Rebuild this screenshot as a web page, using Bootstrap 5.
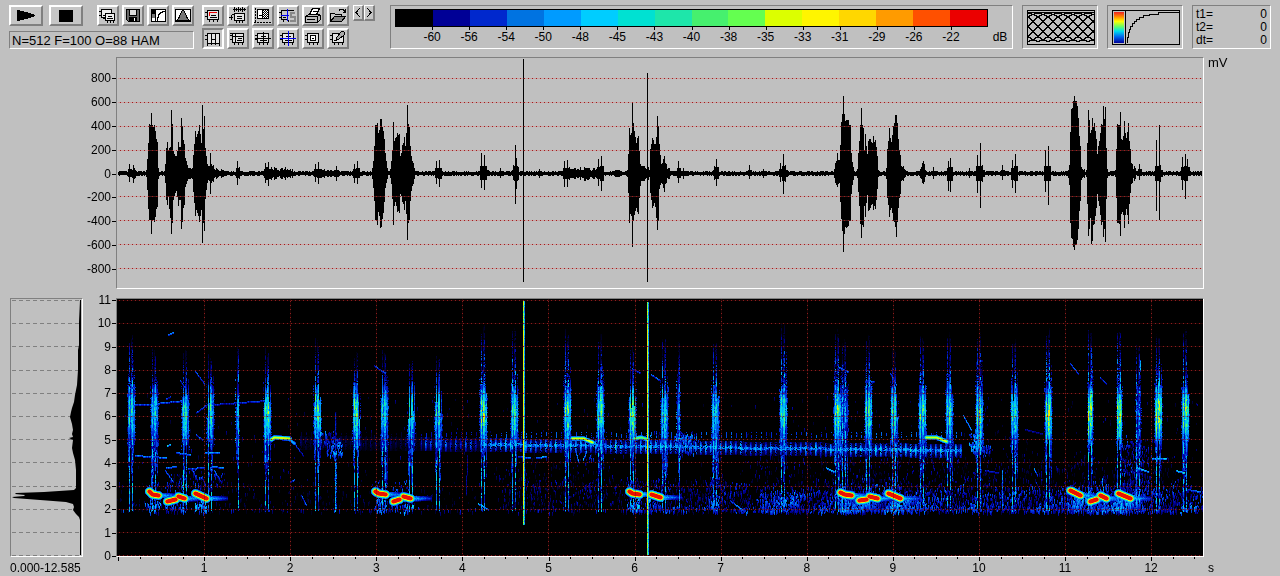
<!DOCTYPE html>
<html lang="en">
<head>
<meta charset="utf-8">
<meta name="viewport" content="width=device-width, initial-scale=1">
<title>Spectrogram analysis</title>
<link href="https://cdn.jsdelivr.net/npm/bootstrap@5.3.0/dist/css/bootstrap.min.css" rel="stylesheet">
<style>
body{background:#c0c0c0;color:#000;font:12px/14px "Liberation Sans",Arial,sans-serif}
.toolbar{padding:5px 9px 0 9px}
.tools-a{width:185px;flex:none}
.gap-tool{gap:3px}
.tool-rows{gap:2px}
.tool{width:22px;height:21px;padding:0;border:2px solid;border-color:#fff #808080 #808080 #fff;background:#c6c6c6;display:flex;align-items:center;justify-content:center;flex:none}
.tool.wide{width:34px}
.tool.slim{width:11px;height:16px;border-width:1px 2px 2px 1px}
.tool.pressed{border-color:#808080 #fff #fff #808080}
.tool svg{width:18px;height:17px;shape-rendering:crispEdges;fill:none;stroke:#000;flex:none}
.tool.slim svg{width:8px;height:13px}
.stop{margin-left:6px}
.sunken{border:1px solid;border-color:#808080 #fff #fff #808080}
.status{height:18px;margin-top:5px;font-size:13px;line-height:17px;padding-left:2px}
.instrument{height:44px;flex:none}
.spaced{margin-left:9px}
.scale{padding:3px 0 0 4px;margin-left:15px}
.swatches{height:18px;border:1px solid #000}
.scale-labels{padding:3px 3.125% 0}
.scale-labels span{position:relative;line-height:15px}
.scale-labels span::before{content:"";position:absolute;left:50%;top:-3px;height:3px;border-left:1px solid #000}
.unit{width:24px}
.mini{width:76px;padding:3px}
.mini svg{display:block;width:70px;height:37px;shape-rendering:crispEdges}
.times{width:79px;padding:2px 3px;line-height:13px}
.workspace{display:grid;grid-template-columns:73px 33px minmax(0,1fr) 76px;grid-template-rows:232px 259px auto;row-gap:9px;padding:8px 0 0 10px}
.workspace canvas{display:block;width:100%}
.wave{height:230px}
.spec{height:257px}
.hist{height:257px}
.y-axis{padding:14px 5px 13px 0;text-align:right}
.y-axis.freq{padding:0 5px 0 0;margin:-5px 0 -6px}
.y-axis span{position:relative}
.y-axis span::after{content:"";position:absolute;right:-5px;top:7px;width:4px;border-top:1px solid #000}
.x-axis{margin-top:-9px}
.second-row{padding-left:2px}
.ticks{height:4px}
.under-axis{margin-top:-5px;white-space:nowrap}
.mv{padding-left:4px;font-size:13px;line-height:12px}
</style>
</head>
<body>
<svg width="0" height="0" class="position-absolute" aria-hidden="true">
  <symbol id="frame" viewBox="0 0 18 17"><path fill="#e4e4e4" d="M3.500 3.500h11v9h-11z"/><path d="M1 5.500h2M1 9.500h2M5.500 13v2M9.500 13v2M13.500 13v2"/></symbol>
</svg>

<header class="toolbar d-flex align-items-start">
  <div class="tools-a">
    <div class="d-flex">
      <button class="tool wide" type="button" aria-label="Play"><svg viewBox="0 0 18 17"><path fill="#000" stroke="none" d="M0 3l5 1 4 1 4 1 5 2v1l-5 2-4 1-4 1-5 1z"/></svg></button>
      <button class="tool wide stop" type="button" aria-label="Stop"><svg viewBox="0 0 18 17"><path fill="#000" stroke="none" d="M2 3h14v12H2z"/></svg></button>
      <div class="d-flex gap-tool ms-auto">
        <button class="tool" type="button" aria-label="Copy"><svg viewBox="0 0 18 17"><path fill="#eee" d="M2.500 2.500h10v8h-10zM0 4.500h2M0 8.500h2"/><path fill="#eee" d="M6.500 6.500h9v7h-9zM4 8.500h2M4 11.500h2M8.500 14v2M11.500 14v2M14.500 14v2M9 9.500h4M8 11.500h6"/></svg></button>
        <button class="tool" type="button" aria-label="Save"><svg viewBox="0 0 18 17"><path fill="#666" d="M2.500 2.500h13v12h-11l-2-2z"/><path fill="#ddd" d="M5.500 2.500h7v6h-7z"/><path fill="#000" d="M5.500 10.500h7v4h-7z"/><path stroke="#fff" d="M10.500 11v3"/></svg></button>
        <button class="tool" type="button" aria-label="Contrast curve"><svg viewBox="0 0 18 17"><path fill="#fff" d="M2.500 2.500h14v12h-14z"/><path fill="#000" stroke="none" d="M3 3h3v4H3z"/><path fill="#777" stroke="none" d="M3 7h3v4H3z"/><path d="M6.500 3v11M8.500 14v-4h1V7h1V6h1V5h2V4.500h3"/></svg></button>
        <button class="tool" type="button" aria-label="Window function"><svg viewBox="0 0 18 17"><path fill="#fff" d="M1.500 2.500h15v12h-15z"/><path fill="#777" d="M2.500 13.500l2-2 1-2 1-3 2-3h1l2 3 1 3 1 2 2 2z"/></svg></button>
      </div>
    </div>
    <div class="status sunken">N=512 F=100 O=88 HAM</div>
  </div>

  <div class="ms-2 d-flex flex-column tool-rows">
    <div class="d-flex gap-tool">
      <button class="tool" type="button" aria-label="Plot frame"><svg viewBox="0 0 18 17"><use href="#frame"/><path d="M7 8.500h5M6 10.500h7"/><path stroke="#e00" d="M5 5.500h8M5.500 5v4"/></svg></button>
      <button class="tool" type="button" aria-label="Plot with waveform"><svg viewBox="0 0 18 17"><path fill="#e4e4e4" d="M5.500 6.500h10v7h-10z"/><path d="M4 2.500h13M5.500 0v5M7.500 1v3M9.500 0v5M11.500 1v3M13.500 0v5M15.500 1v3M0 10.500h4M2.500 8v5M3 7.500h2M7.500 14v2M10.500 14v2M13.500 14v2M8 9.500h5M8 11.500h5"/></svg></button>
      <button class="tool" type="button" aria-label="Plot axes"><svg viewBox="0 0 18 17"><defs><pattern id="check" width="2" height="2" patternUnits="userSpaceOnUse"><path stroke="none" fill="#000" d="M0 0h1v1H0zM1 1h1v1H1z"/></pattern></defs><path fill="#fff" d="M3.500 2.500h11v9h-11z"/><path fill="url(#check)" d="M8.500 2.500h6v9h-6z"/><path stroke-dasharray="2 1" d="M1.500 1v14M0 15.500h17"/><path d="M5 8.500h3"/></svg></button>
      <button class="tool" type="button" aria-label="Cursor spectrum"><svg viewBox="0 0 18 17"><path d="M2.500 3.500h12M2.500 3v10M0 5.500h2M0 10.500h2M3 12.500h5M4.500 13v2M9.500 13v2M4 10.500h3"/><path stroke="#00e" d="M8.500 2v12M2 8.500h8"/><path stroke="#888" stroke-width="2" d="M16 6h-4v4h4v4h-5"/></svg></button>
      <button class="tool" type="button" aria-label="Print"><svg viewBox="0 0 18 17"><path fill="#fff" d="M5.500 7.500l3-6h7l-3 6z"/><path fill="#bbb" d="M1.500 9.500l3-2h10l2 1v4l-3 3h-12z"/><path d="M2 9.500h11l3-2M13.500 9v6M3 12.500h8M9 4.500h4"/></svg></button>
      <button class="tool" type="button" aria-label="Open"><svg viewBox="0 0 18 17"><path d="M1.500 14V6.500h4l1 1h6v2M10 3.500l1-1h3l2 2M16.500 2v3h-3"/><path fill="#888" d="M1.500 14.500l4-5h11l-4 5z"/></svg></button>
    </div>
    <div class="d-flex gap-tool">
      <button class="tool pressed" type="button" aria-label="Vertical markers" aria-pressed="true"><svg viewBox="0 0 18 17"><path fill="#e4e4e4" d="M3.500 3.500h12v10h-12z"/><path d="M7.500 3v12M11.500 3v12M1 5.500h2M1 9.500h2M3.500 14v2M15.500 14v2M8 9.500h3"/></svg></button>
      <button class="tool" type="button" aria-label="Horizontal markers"><svg viewBox="0 0 18 17"><use href="#frame"/><path d="M1 3.500h14M3 6.500h12M6.500 3v9M9 8.500h4M8 10.500h5"/></svg></button>
      <button class="tool" type="button" aria-label="Black crosshair"><svg viewBox="0 0 18 17"><use href="#frame"/><path d="M9.500 2v13M1 8.500h16M7 6.500h5M6 10.500h7"/></svg></button>
      <button class="tool" type="button" aria-label="Blue crosshair"><svg viewBox="0 0 18 17"><use href="#frame"/><path d="M7 6.500h5M6 10.500h7"/><path stroke="#00e" d="M9.500 1v15M1 8.500h16"/></svg></button>
      <button class="tool" type="button" aria-label="Box marker"><svg viewBox="0 0 18 17"><use href="#frame"/><path fill="#fff" d="M6.500 5.500h5v5h-5z"/><path d="M8 8.500h2"/></svg></button>
      <button class="tool" type="button" aria-label="Annotate"><svg viewBox="0 0 18 17"><use href="#frame"/><path fill="#aaa" d="M7.500 9.500v-2l5-6h2l1 1v2l-6 5z"/><path d="M5 10.500h3"/></svg></button>
    </div>
  </div>
  <div class="d-flex ms-1">
    <button class="tool slim" type="button" aria-label="Previous"><svg viewBox="0 0 8 13"><path d="M6 2L2 6.500 6 11"/></svg></button>
    <button class="tool slim" type="button" aria-label="Next"><svg viewBox="0 0 8 13"><path d="M2 2l4 4.500L2 11"/></svg></button>
  </div>

  <section class="instrument sunken scale d-flex flex-grow-1" aria-label="Level scale">
    <div class="flex-grow-1">
      <div class="swatches d-flex" id="swatches"></div>
      <div class="scale-labels d-flex" id="levels"></div>
    </div>
    <div class="unit text-center align-self-end pb-1">dB</div>
  </section>
  <div class="instrument sunken mini spaced"><svg viewBox="0 0 70 37"><path fill="none" stroke="#000" d="M1.500 1.500h67v34h-67zM2 3.500h66"/><path id="lattice" fill="none" stroke="#000"/></svg></div>
  <div class="instrument sunken mini spaced"><svg viewBox="0 0 70 37">
    <defs><linearGradient id="rainbow" x2="0" y2="1"><stop stop-color="#e22"/><stop offset=".15" stop-color="#f80"/><stop offset=".3" stop-color="#ff0"/><stop offset=".47" stop-color="#6f6"/><stop offset=".62" stop-color="#0de"/><stop offset=".8" stop-color="#06e"/><stop offset="1" stop-color="#009"/></linearGradient></defs>
    <path fill="none" stroke="#000" d="M1.500 1.500h67v34h-67zM14.500 2v33"/><path fill="url(#rainbow)" d="M3 3h10v31H3z"/>
    <path fill="none" stroke="#000" d="M16.500 34v-6h1v-5h1v-3h1v-3h2v-3h2v-2h2v-2h3v-2h4v-2h6v-1h9v-2h21v-1"/></svg></div>
  <div class="instrument sunken times spaced">
    <div class="d-flex justify-content-between"><span>t1=</span><span>0</span></div>
    <div class="d-flex justify-content-between"><span>t2=</span><span>0</span></div>
    <div class="d-flex justify-content-between"><span>dt=</span><span>0</span></div>
  </div>
</header>

<main class="workspace">
  <div></div>
  <div class="y-axis d-flex flex-column justify-content-between"><span>800</span><span>600</span><span>400</span><span>200</span><span>0</span><span>-200</span><span>-400</span><span>-600</span><span>-800</span></div>
  <div class="sunken"><canvas class="wave" id="wave" width="1086" height="230" role="img" aria-label="Waveform"></canvas></div>
  <div class="mv">mV</div>

  <div class="sunken"><canvas class="hist" id="hist" width="71" height="257" role="img" aria-label="Mean spectrum"></canvas></div>
  <div class="y-axis freq d-flex flex-column justify-content-between"><span>11</span><span>10</span><span>9</span><span>8</span><span>7</span><span>6</span><span>5</span><span>4</span><span>3</span><span>2</span><span>1</span><span>0</span></div>
  <div class="sunken"><canvas class="spec" id="spec" width="1086" height="257" role="img" aria-label="Spectrogram"></canvas></div>
  <div></div>

  <div class="under-axis">0.000-12.585</div>
  <div></div>
  <div class="x-axis"><canvas class="ticks" id="ticks" width="1088" height="4"></canvas><div class="second-row d-flex text-center" id="seconds"></div></div>
  <div class="under-axis ps-1">s</div>
</main>

<script src="https://cdn.jsdelivr.net/npm/bootstrap@5.3.0/dist/js/bootstrap.bundle.min.js"></script>
<script>
const $ = id => document.getElementById(id);
let seed = 77;
const rnd = () => (seed = (seed * 1664525 + 1013904223) >>> 0) / 4294967296;

// Level scale
const palette = ['#000000','#000096','#0028cd','#0073e1','#009bff','#00cdff','#00e1d2','#1ee6aa','#46f06e','#64ff50','#dcff00','#fff500','#ffd700','#ff9b00','#ff5000','#eb0000'];
palette.forEach(c => $('swatches').insertAdjacentHTML('beforeend', `<span class="flex-fill" style="background:${c}"></span>`));
[-60,-56,-54,-50,-48,-45,-43,-40,-38,-35,-33,-31,-29,-26,-22].forEach(v =>
  $('levels').insertAdjacentHTML('beforeend', `<span class="text-center" style="width:${100/15}%">${v}</span>`));

// Overlapping analysis windows
let lat = '';
for (let k = -9; k < 9; k++) {
  let pen = 'M';
  for (let x = 2; x <= 68; x++) {
    const u = (x - k * 10) / 84;
    if (u < 0 || u > 1) continue;
    lat += `${pen}${x} ${Math.round(32 - 28 * Math.sin(Math.PI * u) ** 2) + .5}`;
    pen = 'L';
  }
}
$('lattice').setAttribute('d', lat);

// Waveform: envelope segments as x, up, down; the rest is background noise
const w = $('wave').getContext('2d');
w.translate(-117, -58);
w.fillStyle = '#000';
const env = [
 [146,3,3,148,30,35,149,48,45,154,47,47,157,34,36,158,4,4],
 [165,8,8,166,25,26,167,33,33,168,22,22,170,30,50,172,50,50,173,24,28,176,18,18,178,33,34,180,28,28,182,47,48,184,30,32,185,16,14,188,6,6,191,3,3],
 [192,6,6,193,20,20,195,45,45,197,40,40,199,48,48,201,30,36,202,30,40,204,57,57,205,25,25,206,10,10,216,4,4,226,2,2],
 [265,5,5,280,4,4,287,5,5,292,3,3],[315,4,4,325,3,3,340,2,2],
 [372,6,6,373,12,14,375,50,48,377,54,55,378,40,38,380,53,53,382,54,53,384,36,30,385,20,14,387,5,5],
 [390,5,5,391,12,10,393,36,45,395,35,28,397,40,38,399,38,38,400,18,22,402,28,28,404,36,36,405,28,28,407,60,60,409,45,45,411,17,17,413,8,8,415,2,2],
 [563,5,5,575,4,4,585,5,6,597,3,3],[614,3,3,622,2,2],
 [627,6,6,628,20,20,629,49,53,631,40,42,633,49,46,634,48,47,636,30,34,638,40,43,640,8,10,641,6,6,649,5,5,650,25,20,652,36,35,654,30,30,656,36,44,658,48,48,659,30,15,661,8,8,663,14,14,666,8,8,670,4,4],
 [834,4,4,836,13,12,839,14,10,840,30,30,841,54,48,843,66,68,845,53,54,848,53,52,850,50,49,851,20,20,853,5,5],
 [857,4,4,858,20,18,860,50,52,861,66,65,863,46,54,864,22,32,865,42,46,867,20,22,868,36,42,870,35,35,871,32,32,873,38,37,875,34,36,877,18,15,878,4,4],
 [886,8,8,887,25,25,889,45,43,891,33,36,893,50,50,895,57,52,897,50,48,898,35,35,900,20,22,901,8,8,905,3,3],
 [919,4,4,923,13,11,925,4,4],[1067,3,3,1069,9,12,1070,40,48,1071,70,70,1073,74,75,1076,76,75,1078,55,55,1080,28,28,1081,8,8,1084,4,4],
 [1086,4,4,1087,30,30,1088,60,60,1090,44,48,1092,54,66,1094,50,50,1096,36,36,1097,21,22,1099,35,35,1101,48,50,1103,60,60,1105,62,64,1106,25,25,1107,5,5],
 [1115,6,6,1117,48,48,1119,50,52,1121,35,42,1123,36,40,1124,50,53,1126,40,40,1128,50,50,1130,25,20,1131,8,8,1135,5,5]
];
const up = new Float32Array(1300), dn = new Float32Array(1300);
for (let x = 118; x < 1202; x++) { up[x] = .6 + rnd() * 1.8; dn[x] = .6 + rnd() * 1.8; }
for (const e of env) for (let i = 0; i + 5 < e.length; i += 3)
  for (let x = e[i]; x <= e[i+3]; x++) {
    const t = (x - e[i]) / (e[i+3] - e[i]), u = e[i+1] + t * (e[i+4] - e[i+1]);
    const j = u < 9 ? .5 + .8 * rnd() : .84 + .18 * rnd();
    up[x] = Math.max(up[x], u * j);
    dn[x] = Math.max(dn[x], (e[i+2] + t * (e[i+5] - e[i+2])) * j);
  }
const spikes = [129,9,8,133,8,9,134,5,5,151,60,60,171,63,60,181,55,55,202,68,69,206,17,16,210,20,20,237,12,11,239,6,5,265,10,9,268,11,12,315,9,8,318,11,10,336,7,7,354,9,9,357,12,10,393,51,51,407,68,66,
 436,12,10,439,13,13,481,20,14,484,18,16,486,7,6,500,5,4,513,8,6,515,28,30,516,15,15,539,4,4,564,12,13,567,13,13,598,14,12,601,17,17,632,70,73,657,57,56,664,17,18,678,12,9,683,5,5,714,7,6,716,14,12,749,8,5,763,4,4,780,10,8,783,19,20,785,8,8,
 837,20,13,843,77,78,896,58,63,933,6,5,948,12,17,950,15,18,969,5,4,977,18,19,980,30,34,982,8,8,1002,8,6,1012,13,14,1015,19,19,1045,23,18,1048,27,31,1074,77,76,1088,63,62,1091,40,70,1103,67,63,1105,66,68,1120,61,62,1124,52,54,1139,9,6,1156,33,37,1159,48,46,1160,8,8,1182,16,16,1185,19,25,1187,14,6,523,114,108,647,100,108];
for (let i = 0; i < spikes.length; i += 3) {
  const [x, a, b] = spikes.slice(i, i + 3);
  up[x] = Math.max(up[x], a); dn[x] = Math.max(dn[x], b);
  if (a < 36) for (const o of [-1, 1, 2]) { up[x+o] = Math.max(up[x+o], Math.min(a * .4, 7)); dn[x+o] = Math.max(dn[x+o], Math.min(b * .4, 7)); }
}
for (let x = 118; x < 1202; x++) w.fillRect(x, 173 - Math.round(up[x]), 1, Math.round(up[x]) + Math.round(dn[x]) + 1);
for (const y of [78,102,126,150,196,220,244,268]) {
  w.fillStyle = 'rgba(230,90,90,.28)';
  w.fillRect(118, y, 1084, 1);
  w.fillStyle = '#a01c1c';
  for (let x = 120; x < 1202; x += 4) w.fillRect(x, y, 1, 1);
}

// Mean spectrum
const h = $('hist').getContext('2d');
h.translate(-11, -299);
h.fillStyle = '#808080';
for (let k = 0; k < 12; k++) for (let x = 12; x < 80; x += 7) h.fillRect(x, Math.round(300 + k * 23.2), 4, 1);
h.fillStyle = '#000';
h.beginPath();
[81,300,80,300,79,322,79,345,78,350,78,370,77,385,75,395,74,402,72,408,71,412,70,417,72,424,73,430,72,434,73,437,69,438,73,440,72,448,73,453,75,460,76,470,76,488,74,490,44,492,16,493,15,494,25,495,24,496,12,497,14,498,40,500,66,502,73,504,74,507,73,510,76,514,79,517,80,520,80,555,81,555]
  .forEach((v, i, a) => { if (i % 2) h.lineTo(a[i-1], v); });
h.fill();
h.fillRect(80, 300, 1, 255);

// Spectrogram intensity field
const W = 1086, H = 257, X0 = 117, Y0 = 299, f = new Float32Array(W * H);
const put = (x, y, v) => { x = Math.round(x) - X0; y = Math.round(y) - Y0; if (x >= 0 && y >= 0 && x < W && y < H) f[y*W+x] = Math.max(f[y*W+x], v); };
const grain = (x0, x1, y0, y1, density, level, blur = 8) => {
  const n = (x1 - x0) * (y1 - y0) * density;
  for (let i = 0; i < n; i++) {
    const x = x0 + rnd() * (x1 - x0) + (rnd() - rnd()) * blur;
    const y = y0 + rnd() * (y1 - y0) + (rnd() - rnd()) * blur;
    if (y > 512) continue;
    const patch = .75 + .25 * Math.sin(x * .13 + y * .2) * Math.sin(x * .041);
    const v = level * (.3 + .8 * rnd()) * patch, len = 1 + rnd() * 3;
    for (let k = 0; k < len; k++) put(x, y + k, v * (1 - k * .1));
  }
};
// low-frequency background
grain(118, 480, 484, 511, .03, .16); grain(500, 640, 478, 510, .09, .22); grain(640, 750, 482, 510, .14, .25);
grain(760, 830, 490, 512, .25, .36); grain(830, 1200, 488, 511, .24, .34); grain(118, 1203, 508, 511, .08, .3, 2);
grain(640, 1203, 506, 512, .16, .38, 3); grain(765, 800, 494, 512, .25, .42);
grain(750, 1190, 456, 490, .05, .2); grain(840, 920, 498, 512, .45, .44); grain(1070, 1140, 496, 512, .5, .44);
grain(1124, 1148, 440, 505, .2, .32); grain(500, 620, 458, 480, .03, .2); grain(708, 720, 476, 510, .22, .38);
grain(168, 226, 470, 484, .09, .34, 5); grain(118, 1203, 395, 484, .004, .18);
// insect band
let beatGain = 1;
for (let x = 300; x < 962; x++) {
  const c = x < 700 ? 444 + (x - 480) * .012 : 447 + (x - 700) * .012;
  const strong = x > 480 ? 1 : x > 420 ? .7 : .28, beat = x % 5;
  if (beat === 0) beatGain = .7 + rnd() * .5;
  const gain = (beat === 0 ? 1 : beat === 1 ? .8 : .35) * strong * beatGain;
  for (let y = -6; y < 8; y++) if (rnd() < .88) put(x, c + y, (.5 - Math.abs(y) * .04) * gain * (.75 + .3 * rnd()));
  for (let y = -1; y < 2; y++) if (x > 480 && rnd() < .75) put(x, c + y, .2 + rnd() * .22);
  if (beat === 1) for (let y = 432; y < 438; y++) if (rnd() < .65) put(x, y, .28 * strong * beatGain);
}
grain(318, 336, 432, 442, .4, .44, 4); grain(326, 341, 440, 456, .4, .44, 4); grain(676, 696, 434, 441, .6, .5, 4); grain(680, 694, 442, 454, .25, .42, 4);
grain(970, 982, 432, 450, .5, .5, 4); grain(976, 990, 444, 456, .35, .46, 5); grain(652, 670, 434, 446, .18, .38); grain(577, 592, 442, 458, .08, .34);
// broadband clicks: x, top, peak, half width
const clicks = [131,332,.55,3,154,345,.52,3,185,348,.58,3,210,350,.58,3,237,338,.42,1,267,345,.66,3,317,336,.62,3,356,350,.62,3,384,345,.56,3,411,352,.57,3,438,350,.54,3,483,325,.68,3,514,325,.6,3,567,328,.64,3,600,332,.64,3,632,340,.66,3,664,332,.56,3,678,340,.36,1,715,335,.52,3,783,322,.6,3,837,328,.64,3,844,336,.34,3,868,332,.62,3,894,348,.58,3,922,332,.6,3,949,332,.6,3,979,330,.64,3,1014,335,.56,3,1048,325,.7,3,1090,323,.7,2,1119,321,.68,2,1138,338,.3,2,1158,333,.74,3,1185,326,.7,3];
for (let i = 0; i < clicks.length; i += 4) {
  const [cx, top, pk, hw] = clicks.slice(i, i + 4);
  for (let dx = -hw - 1; dx <= hw + 1; dx++) {
    const line = dx === -2 || dx === 1, hot = line || dx === 0;
    const a = top + (hot ? rnd() * 12 : 25 + rnd() * 45), b = line ? 511 : 485 - rnd() * 45;
    const gain = hot ? 1 : .65 + rnd() * .3, centre = 408 + rnd() * 8;
    let run = .8;
    for (let y = a; y < b; y++) {
      const d = y - centre, g = Math.exp(-d * d / (d < 0 ? 950 : 1300));
      if (rnd() < .5) run = .2 + rnd() * .9;
      if (Math.abs(dx) > hw && (Math.abs(d) > 35 || rnd() < .6)) continue;
      if (y < 385 && rnd() < (hot ? .12 : .4)) continue;
      const fade = Math.min(1, (y - top + 6) / 60);
      const core = pk * (hot ? 1.2 : 1) * gain * g * (.45 + run * .5);
      const rail = (line ? .48 : .27) * run * fade;
      put(cx + dx, y, Math.max(core * (Math.abs(dx) > hw ? .4 : 1), rail));
    }
  }
}
for (let y = 412; y < 512; y++) { put(335, y, (y > 458 ? .48 : .25) * (.5 + rnd() * .5)); put(336, y, (y > 455 ? .4 : .1) * rnd()); }
// thin faint traces: x1,y1,x2,y2,level
[[168,334,173,332,.32],[195,371,204,383,.28],[132,404,152,404,.28],[154,403,184,400,.3],[212,404,240,402,.24],[240,402,266,400,.25],[196,412,207,404,.28],[135,455,166,457,.34],[176,452,190,454,.34],[205,452,219,452,.36],[166,467,176,466,.34],[188,468,204,467,.32],[212,466,223,467,.36],[165,470,172,480,.32],[192,470,196,478,.32],[214,470,220,480,.3],[166,398,170,396,.25],[180,380,184,386,.26],[374,365,384,372,.3],[196,434,202,439,.3],[167,445,170,444,.5],[536,457,546,456,.4],[518,456,530,457,.3],[295,444,303,455,.24],[290,481,294,479,.3],[301,495,306,504,.3],[478,503,488,509,.4],[467,455,466,494,.16],[730,500,742,509,.36],[632,368,640,372,.28],[651,374,660,380,.32],[575,448,578,461,.38],[586,451,583,459,.38],[963,415,971,429,.36],[838,366,848,371,.32],[1070,363,1078,373,.3],[1100,377,1106,383,.26],[890,373,896,384,.3],[867,380,874,381,.3],[1136,467,1148,471,.48],[1152,458,1166,458,.45],[1176,470,1184,472,.5],[1188,489,1200,491,.34],[1025,429,1042,433,.16],[985,470,998,472,.24],[1140,360,1140,370,.38],[1002,470,1002,509,.34],[1102,478,1104,509,.38],[826,467,834,471,.44],[1034,468,1037,475,.33]]
.forEach(([a,b,c,d,l]) => { const n = Math.max(Math.abs(c-a), Math.abs(d-b)); for (let i = 0; i <= n; i++) { const v = l * (.6 + .6 * rnd()); put(a+(c-a)*i/n, b+(d-b)*i/n, v); put(a+(c-a)*i/n, b+(d-b)*i/n+1, v*.7); } });
// tonal strokes
const stroke = (pts, core, level, falloff) => {
  for (let k = 0; k + 3 < pts.length; k += 2) {
    const [a,b,c,d] = pts.slice(k, k + 4);
    for (let y = Math.min(b,d) - 12; y < Math.max(b,d) + 12; y++) for (let x = a - 12; x < c + 12; x++) {
      const t = Math.max(0, Math.min(1, ((x-a)*(c-a)+(y-b)*(d-b)) / ((c-a)**2+(d-b)**2)));
      const q = Math.hypot((x-a-t*(c-a)) * .95, y-b-t*(d-b));
      const v = level - Math.max(0, q - core) * falloff;
      if (v > .2) put(x, y, v * (q > core + 1 ? .85 + rnd() * .15 : 1));
    }
  }
};
stroke([271,439,274,437,289,438], .5, .76, .28); stroke([289,439,294,443], .5, .4, .18);
stroke([572,438,583,438,592,442], .5, .76, .28); stroke([634,438,641,437,647,439], .5, .64, .22); stroke([926,437,936,437,946,441], .5, .74, .26);
[[149,491,152,494,158,495],[167,501,175,499],[178,496,184,498],[195,493,206,498],[375,491,378,493,385,494],[393,501,399,499],[403,496,410,498],[629,491,632,493,639,494],[651,494,660,497],[840,492,844,494,851,495],[859,500,866,499],[869,496,877,498],[888,493,900,498],[1070,490,1080,495],[1090,501,1096,499],[1100,495,1106,498],[1118,493,1130,498]]
.forEach(p => {
  const a = p[0], e = p[p.length-2], y = p[p.length-1];
  grain(a, e, 480, 490, .16, .38, 6); grain(a, e, y + 3, 511, .5, .5, 5);
  stroke(p, 1.7, 1, .27);
  for (let x = 0; x < 20; x++) for (let k = -2; k < 3; k++) put(e + 2 + x, y + k, (.5 - x * .014 - Math.abs(k) * .07) * (.75 + rnd() * .3));
});
for (const [x, y0, y1] of [[523,301,525],[647,302,555]]) for (let y = y0; y < y1; y++) {
  put(x, y, y > 330 && y < 505 ? .72 + rnd() * .1 : .58 + rnd() * .2);
  put(x + 1, y, .3 + rnd() * .15);
}

const ramp = [[0,0,0],[0,0,60],[0,0,160],[0,50,220],[0,120,240],[0,180,255],[0,220,230],[40,235,150],[110,255,80],[220,255,0],[255,215,0],[255,130,0],[235,15,0]];
const s = $('spec').getContext('2d'), img = s.createImageData(W, H);
for (let i = 0; i < W * H; i++) {
  const v = Math.min(.999, f[i]) * 12, k = Math.floor(v), t = v - k;
  for (let c = 0; c < 3; c++) img.data[i*4+c] = ramp[k][c] + t * (ramp[k+1][c] - ramp[k][c]);
  img.data[i*4+3] = 255;
}
s.putImageData(img, 0, 0);
const lineH = [...Array(12).keys()].map(k => Math.round(1 + k * 23.2));
const lineV = [...Array(12).keys()].map(k => Math.round(87 + k * 86.1));
s.fillStyle = 'rgba(110,10,10,.28)';
lineH.forEach(y => s.fillRect(0, y, W, 1));
lineV.forEach(x => s.fillRect(x, 0, 1, H));
s.fillStyle = '#8c1e1e';
lineH.forEach(y => { for (let x = 2; x < W; x += 4) s.fillRect(x, y, 1, 1); });
lineV.forEach(x => { for (let y = 2; y < H; y += 4) s.fillRect(x, y, 1, 1); });

// Time axis
const t = $('ticks').getContext('2d');
for (let k = 0; k <= 50; k++) t.fillRect(Math.round(2 + k * 21.525), 0, 1, k % 4 ? 2 : 4);
const second = 86.1 / 1086 * 100;
$('seconds').insertAdjacentHTML('beforeend', `<span style="width:${second / 2}%"></span>`);
for (let k = 1; k < 13; k++) $('seconds').insertAdjacentHTML('beforeend', `<span style="width:${second}%">${k}</span>`);
</script>
</body>
</html>
